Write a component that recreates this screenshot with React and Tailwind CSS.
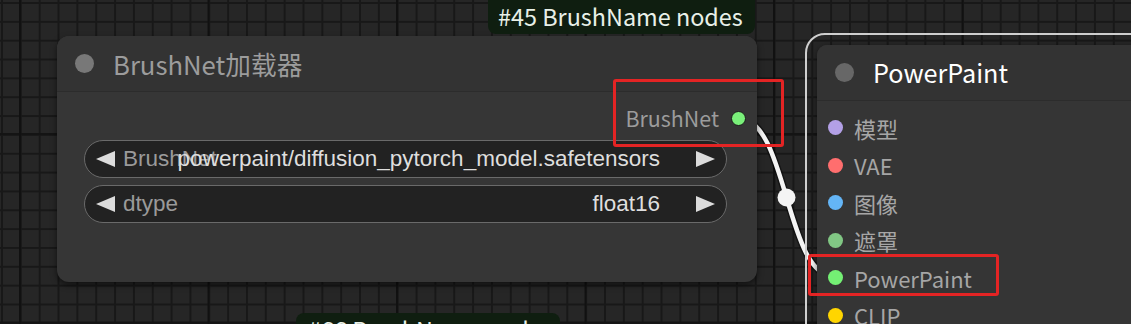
import React from "react";

const LABEL_FONT = "font-['Noto_Sans_CJK_SC','Noto_Sans',sans-serif]";
const WIDGET_FONT = "font-['Liberation_Sans',Arial,sans-serif]";

function LeftArrow() {
  return (
    <svg width="19" height="16" viewBox="0 0 19 16" className="shrink-0">
      <polygon points="0,8 19,0 19,16" fill="#dcdcdc" />
    </svg>
  );
}

function RightArrow() {
  return (
    <svg width="19" height="16" viewBox="0 0 19 16" className="shrink-0">
      <polygon points="19,8 0,0 0,16" fill="#dcdcdc" />
    </svg>
  );
}

function ComboWidget({ label, value }) {
  return (
    <div className="flex h-[38px] items-center rounded-full border-[1.5px] border-[#6a6a6a] bg-[#222222] pl-[11px] pr-[11px]">
      <LeftArrow />
      <div className="grid flex-1 items-center pl-[8px] pr-[36px]">
        <span className={`col-start-1 row-start-1 justify-self-start text-[22.5px] leading-none text-[#9a9a9a] ${WIDGET_FONT}`}>
          {label}
        </span>
        <span className={`col-start-1 row-start-1 justify-self-end whitespace-nowrap text-[22.5px] leading-none text-[#dedede] ${WIDGET_FONT}`}>
          {value}
        </span>
      </div>
      <RightArrow />
    </div>
  );
}

function InputRow({ color, label }) {
  return (
    <div className="flex h-[37.5px] items-center gap-[11px]">
      <span className={`h-[15px] w-[15px] shrink-0 rounded-full ${color}`} />
      <span className={`text-[22px] leading-none text-[#a6a6a6] ${LABEL_FONT}`}>{label}</span>
    </div>
  );
}

export default function App() {
  return (
    <div className="relative h-[324px] w-[1131px] overflow-hidden bg-[#262626] bg-[image:linear-gradient(to_right,#111111_2px,transparent_2px),linear-gradient(to_bottom,#141414_2px,transparent_2px),linear-gradient(to_right,#181818_1.5px,transparent_1.5px),linear-gradient(to_bottom,#181818_1.5px,transparent_1.5px)] bg-[size:188.5px_188.5px,188.5px_188.5px,18.85px_18.85px,18.85px_18.85px] bg-[position:19px_0,0_133px,1px_0,0_2px]">
      {/* link wire (drawn beneath nodes) */}
      <svg className="absolute left-0 top-0" width="1131" height="324" viewBox="0 0 1131 324">
        <path d="M738 118 C788 118 785 277 835 277" fill="none" stroke="rgba(0,0,0,0.45)" strokeWidth="7.5" />
        <path d="M738 118 C788 118 785 277 835 277" fill="none" stroke="#f4f4f4" strokeWidth="4.5" />
        <circle cx="786.5" cy="197.5" r="9" fill="#f4f4f4" />
      </svg>

      {/* Left node: BrushNet loader */}
      <div className="absolute left-[57px] top-[36px] flex h-[246px] w-[700px] flex-col overflow-hidden rounded-[12px] bg-[#363636] shadow-[0_3px_6px_rgba(0,0,0,0.55)]">
        <div className="flex h-[56px] shrink-0 items-center gap-[19px] border-b border-[#2c2c2c] bg-[#333333] pl-[18px]">
          <span className="h-[19px] w-[19px] rounded-full bg-[#787878]" />
          <span className={`text-[25.7px] leading-none text-[#9c9c9c] ${LABEL_FONT}`}>BrushNet加载器</span>
        </div>
        <div className="flex flex-col">
          <div className="mt-[13px] flex h-[26px] items-center justify-end gap-[12px] pr-[11px]">
            <span className={`text-[21.4px] leading-none text-[#9c9c9c] ${LABEL_FONT}`}>BrushNet</span>
            <span className="h-[15px] w-[15px] rounded-full border border-[#1a1a1a] bg-[#7af07a]" />
          </div>
          <div className="ml-[27px] mr-[30px] mt-[9px] flex flex-col gap-[7px]">
            <ComboWidget label="BrushNet" value="powerpaint/diffusion_pytorch_model.safetensors" />
            <ComboWidget label="dtype" value="float16" />
          </div>
        </div>
      </div>

      {/* Badge above left node */}
      <div className="absolute left-[488px] top-0 flex h-[34px] w-[267px] items-center rounded-b-[8px] bg-[#0f1e10] pl-[10px]">
        <span className={`whitespace-nowrap text-[23.4px] leading-none text-[#e8f0e8] ${LABEL_FONT}`}>#45 BrushName nodes</span>
      </div>

      {/* Badge at bottom */}
      <div className="absolute left-[296px] top-[313px] flex h-[34px] w-[264px] items-center rounded-t-[8px] bg-[#0f1e10] pl-[12px]">
        <span className={`whitespace-nowrap text-[23.4px] leading-none text-[#e8f0e8] ${LABEL_FONT}`}>#66 BrushName nodes</span>
      </div>

      {/* Selection outline around right node */}
      <div className="absolute left-[805px] top-[33px] h-[400px] w-[500px] rounded-[20px] border-2 border-[#cfcfcf]" />

      {/* Right node: PowerPaint */}
      <div className="absolute left-[817px] top-[45px] flex h-[380px] w-[480px] flex-col rounded-[10px] bg-[#353535] shadow-[0_2px_6px_rgba(0,0,0,0.5)]">
        <div className="flex h-[56px] shrink-0 items-center gap-[19px] rounded-t-[10px] border-b border-[#2c2c2c] bg-[#333333] pl-[18px]">
          <span className="h-[19px] w-[19px] rounded-full bg-[#676767]" />
          <span className={`text-[25.2px] leading-none text-white ${LABEL_FONT}`}>PowerPaint</span>
        </div>
        <div className="flex flex-col pl-[11px] pt-[8px]">
          <InputRow color="bg-[#b3a0e6]" label="模型" />
          <InputRow color="bg-[#ff6e6e]" label="VAE" />
          <InputRow color="bg-[#64b5f6]" label="图像" />
          <InputRow color="bg-[#81c784]" label="遮罩" />
          <InputRow color="bg-[#74f074]" label="PowerPaint" />
          <InputRow color="bg-[#ffd500]" label="CLIP" />
        </div>
      </div>

      {/* Red annotation boxes */}
      <div className="absolute left-[613px] top-[79px] h-[68px] w-[171px] rounded-[3px] border-[3px] border-[#e42424]" />
      <div className="absolute left-[808px] top-[254px] h-[42px] w-[191px] rounded-[3px] border-[3px] border-[#e42424]" />
    </div>
  );
}
